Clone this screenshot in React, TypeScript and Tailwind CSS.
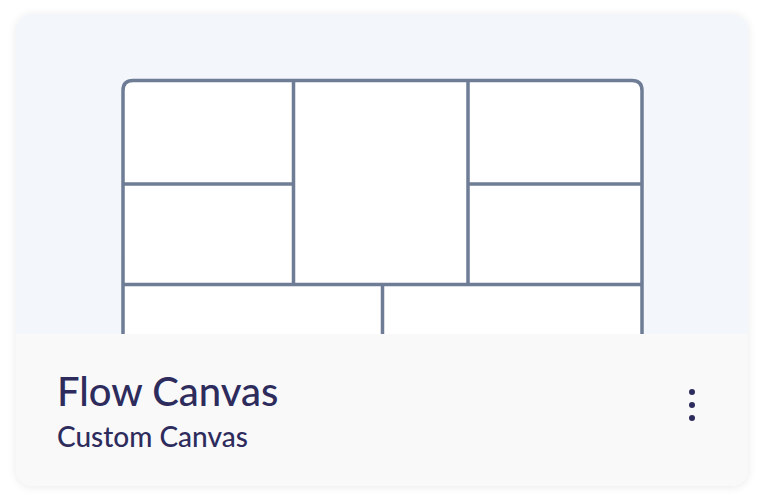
import React from "react";

export default function App() {
  return (
    <div className="w-[766px] h-[502px] bg-white pt-[14px] pl-[16px]" style={{ fontFamily: "Lato, 'Noto Sans', sans-serif" }}>
      <div className="w-[732px] h-[472px] rounded-[16px] overflow-hidden shadow-[0_1px_10px_rgba(0,0,0,0.09)] flex flex-col">
        <div className="h-[320px] bg-[#f3f6fa] overflow-hidden">
          <svg width="732" height="320" viewBox="0 0 732 320" className="block">
            <path d="M107 330 V76.5 Q107 66.5 117 66.5 H616 Q626 66.5 626 76.5 V330 Z" fill="#ffffff" stroke="#6e7c95" strokeWidth="3.5" />
            <g stroke="#6e7c95" strokeWidth="3.5" fill="none">
              <line x1="277.5" y1="66.5" x2="277.5" y2="270.5" />
              <line x1="452" y1="66.5" x2="452" y2="270.5" />
              <line x1="107" y1="170" x2="277.5" y2="170" />
              <line x1="452" y1="170" x2="626" y2="170" />
              <line x1="107" y1="270.5" x2="626" y2="270.5" />
              <line x1="366.5" y1="270.5" x2="366.5" y2="330" />
            </g>
          </svg>
        </div>
        <div className="flex-1 bg-[#f9f9fa] flex items-start justify-between pl-[41px] pr-[53px] pt-[33px]">
          <div className="flex flex-col font-medium">
            <div className="text-[40px] leading-[48px] text-[#2d2c5c]">Flow Canvas</div>
            <div className="text-[28px] leading-[34px] mt-[4px] text-[#2d2c5c]">Custom Canvas</div>
          </div>
          <div className="mt-[22px] flex flex-col gap-[7px]">
            <div className="w-[6px] h-[6px] rounded-full bg-[#2d2c5c]" />
            <div className="w-[6px] h-[6px] rounded-full bg-[#2d2c5c]" />
            <div className="w-[6px] h-[6px] rounded-full bg-[#2d2c5c]" />
          </div>
        </div>
      </div>
    </div>
  );
}
